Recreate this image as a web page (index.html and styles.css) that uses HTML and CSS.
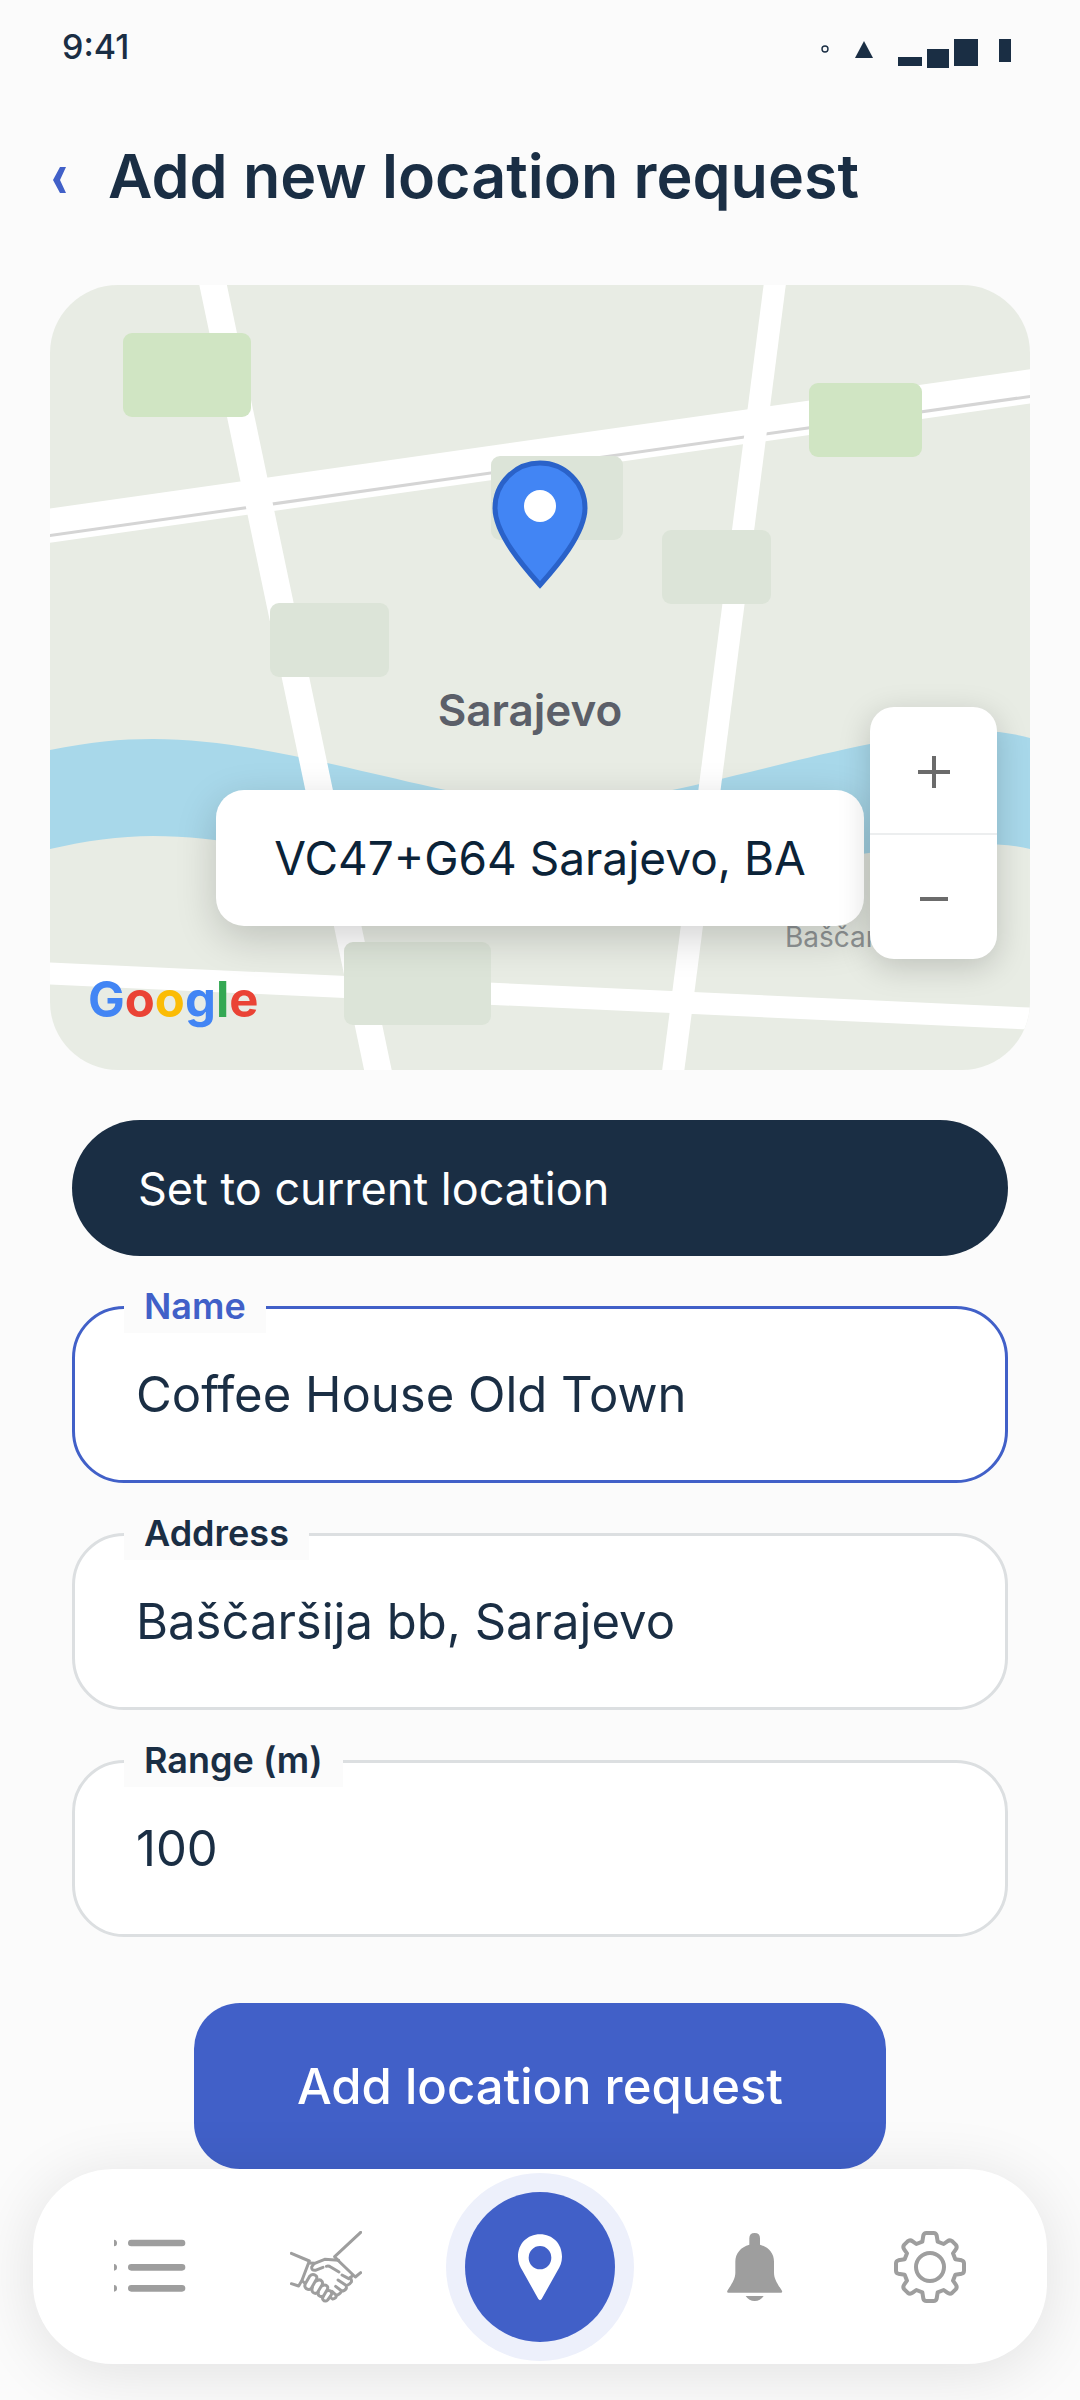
FILE: index.html
```html
<!DOCTYPE html>
<html lang="en">
<head>
  <meta charset="UTF-8" />
  <meta name="viewport" content="width=device-width, initial-scale=1.0"/>
  <title>Add new location request</title>
  <link rel="stylesheet" href="styles.css">
</head>
<body>
  <div class="status-bar">
    <span class="time">9:41</span>
    <svg class="status-icons" viewBox="0 0 192 30" aria-hidden="true">
      <circle cx="5" cy="11" r="3" fill="none" stroke="#1a2e44" stroke-width="1.4"/>
      <path d="M44 3l9 17h-18z"/>
      <path d="M78 19h24v9h-24zM107 11h22v19h-22zM134 1h24v27h-24zM179 1h12v23h-12z"/>
    </svg>
  </div>

  <header class="page-header">
    <button type="button" class="back" aria-label="Back">
      <svg viewBox="0 0 16 28"><path d="M8 1h6L8 14l6 13H8L1 14z"/></svg>
    </button>
    <h1>Add new location request</h1>
  </header>

  <main>
    <section class="map" aria-label="Map">
      <svg class="map-canvas" viewBox="0 0 980 785" preserveAspectRatio="xMidYMid slice">
        <!-- river -->
        <path fill="#a8d8ea" d="M0 465C40 457 70 454 103 454C240 454 400 520 510 520C620 520 810 446 925 446C950 446 965 449 980 453V564C965 560 945 559 925 559C800 559 640 610 510 610C380 610 230 551 103 551C70 551 35 556 0 564Z"/>
        <!-- roads -->
        <g stroke="#fff" fill="none">
          <path stroke-width="34" d="M-10 242L990 100"/>
          <path stroke="#d5d5d5" stroke-width="3" d="M-10 252L990 110"/>
          <path stroke-width="27" d="M161 -10L330 795"/>
          <path stroke-width="22" d="M726 -10L622 795"/>
          <path stroke-width="22" d="M-10 688L990 734"/>
        </g>
        <!-- parks and blocks -->
        <g fill="#d0e5c3">
          <rect x="73" y="48" width="128" height="84" rx="9"/>
          <rect x="759" y="98" width="113" height="74" rx="9"/>
        </g>
        <g fill="#dce4d8">
          <rect x="220" y="318" width="119" height="74" rx="9"/>
          <rect x="441" y="171" width="132" height="84" rx="9"/>
          <rect x="612" y="245" width="109" height="74" rx="9"/>
          <rect x="294" y="657" width="147" height="83" rx="9"/>
        </g>
        <text class="city" x="480" y="441" text-anchor="middle">Sarajevo</text>
        <text class="district" x="735" y="662">Baščaršija</text>
        <!-- pin -->
        <path fill="#4285f4" stroke="#2a62c9" stroke-width="5" d="M490 300C474 282 445 249 445 223A45 45 0 0 1 535 223C535 249 506 282 490 300Z"/>
        <circle cx="490" cy="221" r="16" fill="#fff"/>
      </svg>
      <div class="google"><span class="b">G</span><span class="r">o</span><span class="y">o</span><span class="b">g</span><span class="g">l</span><span class="r">e</span></div>
      <div class="plus-code">VC47+G64 Sarajevo, BA</div>
      <div class="zoom">
        <button type="button" aria-label="Zoom in">
          <svg viewBox="0 0 32 32"><path d="M0 16h32M16 0v32"/></svg>
        </button>
        <button type="button" aria-label="Zoom out">
          <svg viewBox="0 0 32 32"><path d="M2 16h28"/></svg>
        </button>
      </div>
    </section>

    <form class="form">
      <button type="button" class="set-current">Set to current location</button>
      <div class="field active">
        <label for="name">Name</label>
        <input type="text" id="name" value="Coffee House Old Town">
      </div>
      <div class="field">
        <label for="address">Address</label>
        <input type="text" id="address" value="Baščaršija bb, Sarajevo">
      </div>
      <div class="field">
        <label for="range">Range (m)</label>
        <input type="text" id="range" inputmode="numeric" value="100">
      </div>
      <button type="submit" class="submit">Add location request</button>
    </form>
  </main>

  <nav class="tab-bar">
    <a href="#list" aria-label="List">
      <svg viewBox="0 0 216 216">
        <g fill="none" stroke="#9e9e9e" stroke-width="20" stroke-linecap="round">
          <path d="M52 36h152M52 109h152M52 172h152"/>
          <path d="M-1 36h.1M-1 109h.1M-1 172h.1"/>
        </g>
      </svg>
    </a>
    <a href="#requests" aria-label="Requests">
      <svg viewBox="0 0 216 216">
        <g fill="none" stroke="#9e9e9e" stroke-width="9" stroke-linecap="round" stroke-linejoin="round">
          <path d="M4 67L58 90L36 148L26 165L4 158"/>
          <path d="M212 4L134 77L146 90L196 138L212 125"/>
          <path d="M58 96L74 97L104 85L146 88"/>
          <path d="M72 98L65 108Q64 119 76 118L99 109M109 106Q116 104 122 108L147 123M156 132L176 143L186 136"/>
          <path d="M37 150L46 158M46 158L59 136Q67 127 76 133Q84 138 78 147L64 172Q58 178 49 173Q42 168 46 158"/>
          <path d="M79 150Q90 143 96 151Q99 156 96 162L83 184Q77 190 69 184Q64 180 67 169"/>
          <path d="M97 164Q107 159 112 166Q115 171 111 177L101 194Q94 200 87 194Q83 190 85 184"/>
          <path d="M112 179Q122 177 125 185Q126 190 121 196L113 207Q106 214 99 206Q96 202 100 196"/>
          <path d="M144 147L170 164Q179 161 184 153Q186 146 180 141M137 166L155 180Q164 180 169 172V164M126 181L139 193Q148 192 155 180M121 197Q126 209 137 200L140 193"/>
        </g>
      </svg>
    </a>
    <a href="#locations" class="current" aria-label="Locations">
      <svg viewBox="0 0 216 216">
        <path fill="#fff" fill-rule="evenodd" d="M108 10C70 10 42 38 42 77C42 94 48 107 56 120L103 204Q108 211 113 204L160 120C168 107 174 94 174 77C174 38 146 10 108 10ZM108 45A34 35 0 1 1 108 115A34 35 0 1 1 108 45Z"/>
      </svg>
    </a>
    <a href="#alerts" aria-label="Alerts">
      <svg viewBox="0 0 216 216">
        <path fill="#9e9e9e" d="M91 41V22Q91 6 107 6T123 22V41C148 48 165 66 165 92V125C165 142 174 156 188 178Q192 185 186 185H28Q22 185 26 178C40 156 49 142 49 125V92C49 66 66 48 91 41ZM80 195H134Q124 210 107 210T80 195Z"/>
      </svg>
    </a>
    <a href="#settings" aria-label="Settings">
      <svg viewBox="-108 -108 216 216">
        <g fill="none" stroke="#9e9e9e" stroke-width="12" stroke-linejoin="round">
          <circle r="42"/>
          <path d="M-41 -69L-23 -76L-20 -95Q-18 -102 -11 -102H11Q18 -102 20 -95L23 -76L41 -69L52 -77Q60 -83 67 -77L77 -67Q83 -60 77 -52L69 -41L76 -23L95 -20Q102 -18 102 -11V11Q102 18 95 20L76 23L69 41L77 52Q83 60 77 67L67 77Q60 83 52 77L41 69L23 76L20 95Q18 102 11 102H-11Q-18 102 -20 95L-23 76L-41 69L-52 77Q-60 83 -67 77L-77 67Q-83 60 -77 52L-69 41L-76 23L-95 20Q-102 18 -102 11V-11Q-102 -18 -95 -20L-76 -23L-69 -41L-77 -52Q-83 -60 -77 -67L-67 -77Q-60 -83 -52 -77Z"/>
        </g>
      </svg>
    </a>
  </nav>
</body>
</html>
```
FILE: styles.css
```css
* {
  box-sizing: border-box;
}

body {
  margin: 0;
  min-height: 100vh;
  display: flex;
  flex-direction: column;
  background: #fbfbfb;
  color: #1a2e44;
  font-family: Inter, "Open Sans", sans-serif;
}

button, input {
  font-family: inherit;
  color: inherit;
}

button {
  border: none;
  padding: 0;
  cursor: pointer;
}

.status-bar {
  display: flex;
  justify-content: space-between;
  align-items: center;
  height: 92px;
  padding: 0 68px 0 62px;
}

.time {
  font-size: 34px;
  font-weight: 500;
}

.status-icons {
  width: 192px;
  height: 30px;
  margin-top: 14px;
  fill: #1a2e44;
}

.page-header {
  display: flex;
  align-items: center;
  gap: 40px;
  height: 168px;
  padding: 0 52px;
}

.back {
  width: 16px;
  height: 28px;
  margin-top: 8px;
  background: none;
}

.back svg {
  display: block;
  fill: #4160c8;
}

h1 {
  margin: 0;
  font-size: 61px;
  font-weight: 600;
  line-height: 72px;
}

main {
  padding: 25px 50px 0;
}

/* map */
.map {
  position: relative;
  aspect-ratio: 980 / 785;
  border-radius: 68px;
  overflow: hidden;
  background: #e8ece4;
}

.map-canvas {
  display: block;
  width: 100%;
  height: 100%;
}

.city {
  font-size: 44px;
  font-weight: 600;
  fill: #5b5f69;
}

.district {
  font-size: 28px;
  fill: #8f9495;
}

.google {
  position: absolute;
  left: 38px;
  bottom: 40px;
  font-size: 49px;
  font-weight: 700;
  line-height: 60px;
}

.b { color: #4285f4; }
.r { color: #ea4335; }
.y { color: #fbbc05; }
.g { color: #34a853; }

.plus-code {
  position: absolute;
  left: 166px;
  right: 166px;
  bottom: 144px;
  border-radius: 28px;
  background: #fff;
  color: #0b2338;
  font-size: 46px;
  line-height: 136px;
  text-align: center;
  white-space: nowrap;
  box-shadow: 0 12px 40px rgba(0, 0, 0, 0.18);
}

.zoom {
  position: absolute;
  right: 33px;
  bottom: 111px;
  width: 127px;
  border-radius: 24px;
  overflow: hidden;
  background: #fff;
  box-shadow: 0 8px 32px rgba(0, 0, 0, 0.18);
}

.zoom button {
  display: flex;
  align-items: center;
  justify-content: center;
  width: 100%;
  height: 126px;
  padding-top: 4px;
  background: none;
}

.zoom button + button {
  border-top: 2px solid #eceeef;
}

.zoom svg {
  width: 32px;
  height: 32px;
  stroke: #6b6b6b;
  stroke-width: 4;
}

/* form */
.form {
  display: flex;
  flex-direction: column;
  gap: 50px;
  padding: 50px 22px 0;
}

.set-current {
  height: 136px;
  padding: 0 66px;
  border-radius: 68px;
  background: #1a2e44;
  color: #fff;
  font-size: 45px;
  text-align: left;
}

.field {
  position: relative;
}

.field label {
  position: absolute;
  top: -27px;
  left: 52px;
  padding: 0 20px;
  background: #fbfbfb;
  font-size: 36px;
  font-weight: 600;
  line-height: 54px;
}

.field input {
  display: block;
  width: 100%;
  height: 177px;
  padding: 0 61px;
  border: 3px solid #dcdfe1;
  border-radius: 52px;
  background: #fff;
  font-size: 49px;
  outline: none;
}

.active label {
  color: #4160c8;
}

.field.active input {
  border-color: #4160c8;
}

.submit {
  align-self: center;
  width: 692px;
  max-width: 100%;
  height: 166px;
  margin-top: 16px;
  border-radius: 46px;
  background: #4160c8;
  color: #fff;
  font-size: 49px;
  font-weight: 500;
}

/* bottom navigation */
.tab-bar {
  position: sticky;
  bottom: 36px;
  display: flex;
  justify-content: space-between;
  align-items: center;
  height: 195px;
  margin: auto 33px 36px;
  padding: 0 81px;
  border-radius: 80px;
  background: #fff;
  box-shadow: 0 8px 64px rgba(0, 0, 0, 0.11);
}

.tab-bar svg {
  display: block;
  width: 72px;
  height: 72px;
}

.current {
  display: flex;
  align-items: center;
  justify-content: center;
  width: 150px;
  height: 150px;
  border-radius: 50%;
  background: #4160c8;
  box-shadow: 0 0 0 19px #edf0fb;
}
```
